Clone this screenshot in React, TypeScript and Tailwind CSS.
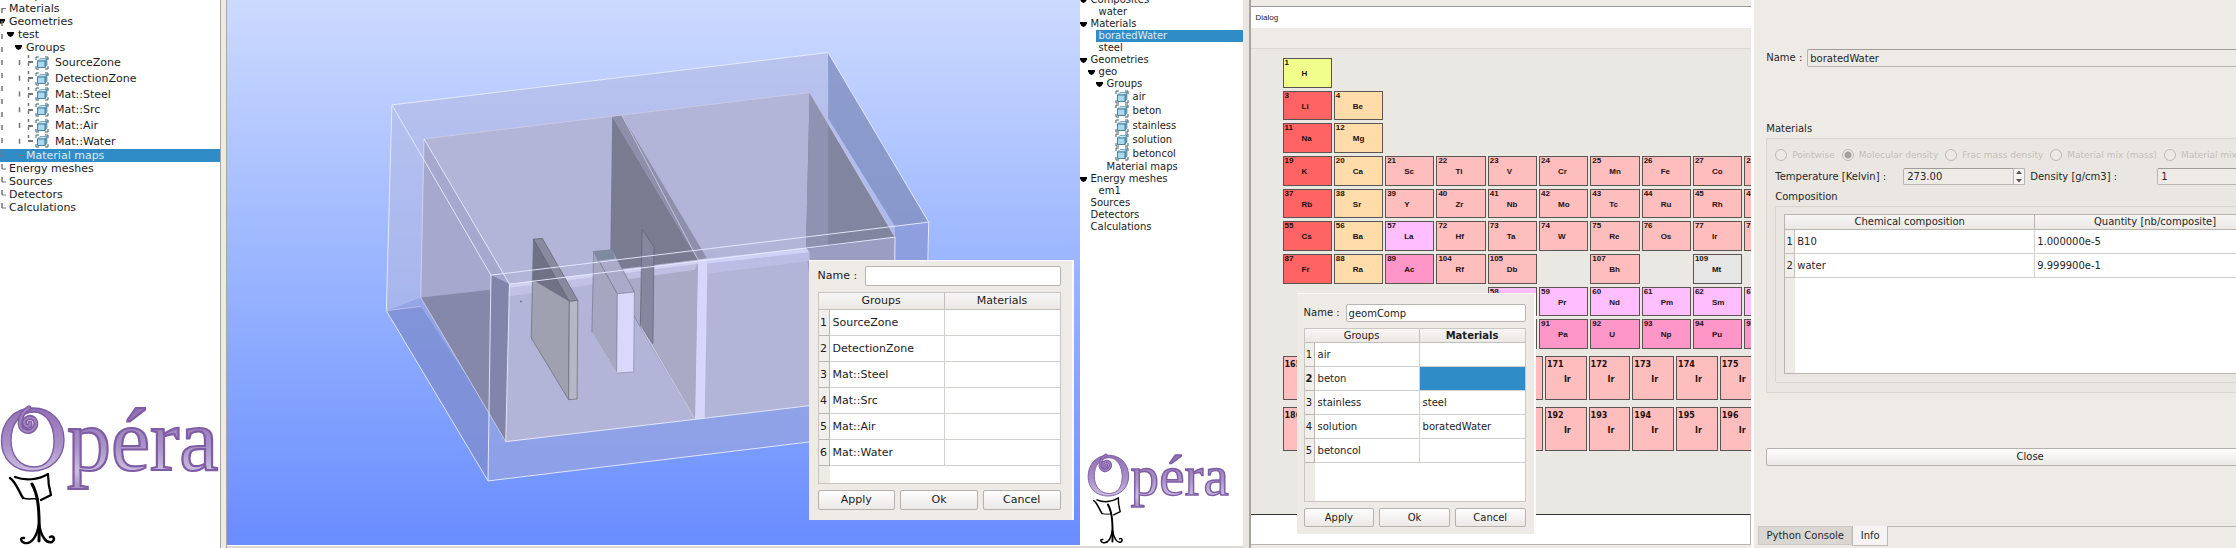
import { useId } from "react";
import type { ReactNode } from "react";

type Size = "lg" | "sm";
type Node = {
  label: string;
  depth: number;
  open?: boolean;
  group?: boolean;
  selected?: boolean;
};

const treeOne: Node[] = [
  { label: "Composites", depth: 0 },
  { label: "Materials", depth: 0 },
  { label: "Geometries", depth: 0, open: true },
  { label: "test", depth: 1, open: true },
  { label: "Groups", depth: 2, open: true },
  { label: "SourceZone", depth: 3, group: true },
  { label: "DetectionZone", depth: 3, group: true },
  { label: "Mat::Steel", depth: 3, group: true },
  { label: "Mat::Src", depth: 3, group: true },
  { label: "Mat::Air", depth: 3, group: true },
  { label: "Mat::Water", depth: 3, group: true },
  { label: "Material maps", depth: 2, selected: true },
  { label: "Energy meshes", depth: 0 },
  { label: "Sources", depth: 0 },
  { label: "Detectors", depth: 0 },
  { label: "Calculations", depth: 0 },
];

const treeTwo: Node[] = [
  { label: "Composites", depth: 0, open: true },
  { label: "water", depth: 1 },
  { label: "Materials", depth: 0, open: true },
  { label: "boratedWater", depth: 1, selected: true },
  { label: "steel", depth: 1 },
  { label: "Geometries", depth: 0, open: true },
  { label: "geo", depth: 1, open: true },
  { label: "Groups", depth: 2, open: true },
  { label: "air", depth: 3, group: true },
  { label: "beton", depth: 3, group: true },
  { label: "stainless", depth: 3, group: true },
  { label: "solution", depth: 3, group: true },
  { label: "betoncol", depth: 3, group: true },
  { label: "Material maps", depth: 2 },
  { label: "Energy meshes", depth: 0, open: true },
  { label: "em1", depth: 1 },
  { label: "Sources", depth: 0 },
  { label: "Detectors", depth: 0 },
  { label: "Calculations", depth: 0 },
];

function GroupIcon() {
  return (
    <svg viewBox="0 0 14 14" className="size-[14px] shrink-0" aria-hidden="true">
      <path d="M1 4V1h3M10 1h3v3M13 10v3h-3M4 13H1v-3" fill="none" stroke="#3d5f6b" strokeWidth="1" />
      <path d="M2.500 5l2.500-2.500h7l-2 2.500z" fill="#c9e8f5" stroke="#4c86a0" strokeWidth=".7" />
      <path d="M10 5l2-2.500v6.500l-2 2.500z" fill="#6fa9c4" stroke="#4c86a0" strokeWidth=".7" />
      <path d="M2.500 5H10v6.500H2.500z" fill="#a9d9ef" stroke="#3f7590" strokeWidth=".9" />
    </svg>
  );
}

function Arrow() {
  return (
    <svg viewBox="0 0 7 5" className="h-[5px] w-[7px] shrink-0" aria-hidden="true">
      <path d="M0 0h7v1.200Q6 4.500 3.500 5 1 4.500 0 1.200z" fill="#000" />
    </svg>
  );
}

const pads = {
  lg: ["pl-[9px]", "pl-[18px]", "pl-[26px]", "pl-[35px]"],
  sm: ["pl-[11px]", "pl-[19px]", "pl-[27px]", "pl-[35px]"],
};

function Row({ node, size }: { node: Node; size: Size }) {
  const height = node.group ? "min-h-0 flex-1" : size === "lg" ? "h-[13px]" : "h-[12px]";
  const fullBar = node.selected && size === "lg" ? "bg-[#308cc6] text-[#dcecf7]" : "";
  const partBar = node.selected && size === "sm" ? "-ml-[3px] flex-1 bg-[#308cc6] pl-[3px] text-[#dcecf7]" : "";
  return (
    <li className={`relative flex items-center whitespace-nowrap ${height} ${pads[size][node.depth]} ${fullBar}`}>
      {node.open && (
        <span className="-ml-[11px] mr-[4px] flex">
          <Arrow />
        </span>
      )}
      {node.group && (
        <span className={size === "lg" ? "mr-[6px] flex" : "mr-[4px] flex"}>
          <GroupIcon />
        </span>
      )}
      <span className={partBar}>{node.label}</span>
    </li>
  );
}

function Tree({ nodes, size }: { nodes: Node[]; size: Size }) {
  const first = nodes.findIndex((n) => n.group);
  const last = first + nodes.filter((n) => n.group).length;
  return (
    <ul className={size === "lg" ? "-mt-[11px] text-[11px] leading-[13px]" : "-mt-[6px] text-[10px] leading-[12px]"}>
      {nodes.slice(0, first).map((n) => (
        <Row key={n.label} node={n} size={size} />
      ))}
      <li>
        <ul className={size === "lg" ? "flex h-[95px] flex-col pt-px" : "flex h-[71px] flex-col"}>
          {nodes.slice(first, last).map((n) => (
            <Row key={n.label} node={n} size={size} />
          ))}
        </ul>
      </li>
      {nodes.slice(last).map((n) => (
        <Row key={n.label} node={n} size={size} />
      ))}
    </ul>
  );
}

function TreeLines() {
  return (
    <svg viewBox="0 0 60 220" className="pointer-events-none absolute left-0 top-0 h-[220px] w-[60px]" aria-hidden="true">
      <g stroke="#777" fill="none" strokeWidth="1.500">
        <path d="M2 0V209" strokeDasharray="5 8" strokeDashoffset="5" />
        <path d="M19.500 55V150" strokeDasharray="5 10.750" strokeDashoffset="-5" />
        <path d="M28.500 55V142" strokeDasharray="3 5" />
        <path d="M2 8.500h4M2 169h4M2 182h4M2 195h4M2 208h4" strokeWidth="1" />
        <path d="M28 62h5M28 78h5M28 94h5M28 110h5M28 126h5M28 141h5" strokeWidth="2" />
      </g>
      <path d="M0 156h3M18 155.500h6" stroke="#8a6f74" />
    </svg>
  );
}

function Logo({ className }: { className: string }) {
  const id = useId();
  return (
    <svg viewBox="0 400 220 148" className={className} role="img" aria-label="Opéra">
      <defs>
        <linearGradient id={id} gradientUnits="userSpaceOnUse" x1="0" y1="405" x2="0" y2="488">
          <stop offset="0" stopColor="#8f6db3" />
          <stop offset=".5" stopColor="#a992c8" />
          <stop offset=".8" stopColor="#cbbfe0" />
          <stop offset="1" stopColor="#a78fc6" />
        </linearGradient>
      </defs>
      <g fontFamily="Liberation Serif, serif" fill={`url(#${id})`} stroke="#7f5ca4">
        <path
          strokeWidth="1.400"
          fillRule="evenodd"
          d="M33 408C14 408 1.500 422 1.500 441C1.500 459 14 471 32 471C51 471 64 458 64 440C64 421 51 408 33 408zM34 412C47 412 54 426 54 441C54 457 47 467 34 467C20 467 11 456 11 440C11 424 20 412 34 412z"
        />
        <text x="67" y="470" fontSize="88" strokeWidth="2.200">
          péra
        </text>
      </g>
      <path d="M29 408C19 414 17 428 25 431C33 434 39 424 34 419C29 415 22 420 25 425C27 428 31 426 30 423" fill="none" stroke="#7f5ca4" strokeWidth="5" strokeLinecap="round" />
      <path d="M29 408C19 414 17 428 25 431C33 434 39 424 34 419C29 415 22 420 25 425C27 428 31 426 30 423" fill="none" stroke="#a183c0" strokeWidth="2" strokeLinecap="round" />
      <g fill="none" stroke="#000" strokeLinecap="round" strokeLinejoin="round">
        <path d="M10 478C16 482 19 492 23 498" strokeWidth="2.400" />
        <path d="M15 477C25 481 38 480 48 474" strokeWidth="2.200" />
        <path d="M48 474C48 482 49 488 51 495L41 500" strokeWidth="2.200" />
        <path d="M23 498C29 500 33 498 38 499" strokeWidth="1.500" />
        <path d="M32 484C37 493 40 504 39 541" strokeWidth="3" />
        <path d="M39 524C37 536 32 544 25 543C20 542 20 537 24 538" strokeWidth="2.400" />
        <path d="M39 524C41 536 46 544 52 542C56 539 53 535 50 537" strokeWidth="2.400" />
      </g>
    </svg>
  );
}

function Scene() {
  return (
    <svg viewBox="-386 -108 2306 1473" className="block h-full w-full" preserveAspectRatio="xMinYMin meet" aria-label="Geometry view">
      <g transform="scale(1 .901)">
        <path d="M60 195L1240 38L1512 547L1500 1165L320 1324L45 813z" fill="#b3b9e4" fillOpacity=".62" />
        <path d="M45 813L138 773L368 1206L1415 1068L1500 1165L320 1324z" fill="#7489dc" fillOpacity=".35" />
        <path d="M45 813L138 800L322 1110L320 1324z" fill="#6378c4" fillOpacity=".4" />
        <path d="M1240 38L1512 547L1421 560L1240 235z" fill="#6f82b6" fillOpacity=".6" />
        <path d="M1421 560L1512 547L1505 1000H1415z" fill="#8294da" fillOpacity=".7" />
        <path d="M147 297L1190 158L1421 592L1415 1068L368 1206L138 773z" fill="#b2b4d8" />
        <path d="M147 297L378 733L374 744L138 773z" fill="#a6a8ce" />
        <path d="M138 773L374 744L368 1206z" fill="#8688aa" />
        <path d="M328 706L378 733L368 1206L322 1110z" fill="#8285aa" />
        <path d="M1190 158L1421 592L1232 622L1180 628z" fill="#81859f" />
        <path d="M1190 158L1240 250V622L1180 628z" fill="#8f92b1" />
        <path d="M1180 628L1421 592V700H1188z" fill="#9b9dc2" />
        <path d="M656 230L888 660L880 1139L735 870L650 700z" fill="#797b91" />
        <path d="M656 690L888 660L880 1139L735 870z" fill="#a9aac6" />
        <path d="M656 230L682 226L912 655L888 660z" fill="#8e90ab" />
        <path d="M888 660L914 656L906 1136L880 1139z" fill="#d6d5fa" />
        <path d="M912 657L1180 624L1190 638L914 672z" fill="#d0d1f7" />
        <path d="M914 672L1190 638V664L912 702z" fill="#bcbde4" />
        <path d="M378 733L888 660L880 690L376 770z" fill="#c3c4e8" fillOpacity=".8" />
        <path d="M378 733L888 664V672L378 744z" fill="#d6d6f8" fillOpacity=".8" />
        <path d="M737 568L769 622L766 912L732 858z" fill="#85879e" stroke="#5e6075" strokeWidth="2" />
        <path d="M443 598L540 785L538 1080L437 895z" fill="#a0a1b0" stroke="#696a78" strokeWidth="2" />
        <path d="M443 598L540 785L440 720z" fill="#6f7184" />
        <path d="M443 598L467 596L563 782L540 785z" fill="#888a9d" stroke="#5f6172" strokeWidth="2" />
        <path d="M540 785L563 782L561 1078L538 1080z" fill="#b5b6c6" stroke="#696a78" strokeWidth="2" />
        <path d="M606 635L670 762L668 1000L601 878z" fill="#a5a6c0" stroke="#777991" strokeWidth="2" />
        <path d="M606 635L656 630L716 757L670 762z" fill="#a9abc9" stroke="#777991" strokeWidth="2" />
        <path d="M606 635L656 630L664 656L616 663z" fill="#7f8aa0" />
        <path d="M670 762L716 757L714 997L668 1000z" fill="#d9d8fb" stroke="#8b8da6" strokeWidth="2" />
        <circle cx="409" cy="785" r="3" fill="#77798f" />
      </g>
      <g transform="scale(1 .901)" fill="none" stroke="#e8ecff" strokeWidth="2.600">
        <path d="M60 195L1240 38L1512 547L328 706zM60 195L45 813L320 1324L328 706M320 1324L1500 1165L1512 547" />
        <path d="M147 297L378 733L368 1206L880 1139L1415 1068M378 733L1421 592L1415 1068" />
        <path d="M147 297L138 773L368 1206M732 858L880 1139M888 660L682 226M601 878L668 1000" strokeOpacity=".6" />
        <path d="M147 297L1190 158L1421 592M45 813L138 800" stroke="#d9cfe4" strokeOpacity=".7" />
      </g>
    </svg>
  );
}

const headBg = "bg-linear-to-b from-[#f7f6f5] to-[#ebe8e4]";
const buttonStyle =
  "rounded-[2px] border border-[#b5b1ac] bg-linear-to-b from-[#fdfdfc] to-[#ebe9e6] text-center text-[#1c1c1c]";

type Assign = { group: string; material: string; active?: boolean };

function AssignDialog({
  name,
  rows,
  size,
  className,
}: {
  name: string;
  rows: Assign[];
  size: Size;
  className: string;
}) {
  const id = useId();
  const lg = size === "lg";
  const hasActive = rows.some((r) => r.active);
  const cell = lg ? "h-[26px] px-[3px]" : "h-[24px] px-[3px]";
  return (
    <form
      onSubmit={(e) => e.preventDefault()}
      className={`absolute flex flex-col border-t border-r-2 border-[#fbfafa] bg-[#eeebe7] text-[#1c1c1c] ${className}`}
    >
      <div className="flex items-center">
        <label htmlFor={id} className={lg ? "w-[47px]" : "w-[42px]"}>
          Name :
        </label>
        <input
          id={id}
          defaultValue={name}
          className={`min-w-0 flex-1 rounded-[2px] border border-[#b8b4af] bg-white px-[2px] outline-none ${lg ? "h-[20px]" : "h-[18px]"}`}
        />
      </div>
      <table className="w-full table-fixed border-separate border-spacing-0 border border-[#c9c6c1] bg-white">
        <colgroup>
          <col className={lg ? "w-[11px]" : "w-[10px]"} />
          <col />
          <col />
        </colgroup>
        <thead>
          <tr className={`${headBg} ${lg ? "h-[17px]" : "h-[14px]"}`}>
            <th colSpan={2} className={`border-b border-r border-[#c3c0bb] p-0 font-normal ${headBg}`}>
              Groups
            </th>
            <th className={`border-b border-[#c3c0bb] p-0 ${hasActive ? "font-bold" : "font-normal"} ${headBg}`}>
              Materials
            </th>
          </tr>
        </thead>
        <tbody>
          {rows.map((r, i) => (
            <tr key={r.group}>
              <th
                scope="row"
                className={`border-b border-r border-[#b9b6b1] bg-[#f1efec] p-0 text-center ${r.active ? "font-bold" : "font-normal"}`}
              >
                {i + 1}
              </th>
              <td className={`border-b border-r border-[#d3d1ce] ${cell}`}>{r.group}</td>
              <td className={`border-b border-[#d3d1ce] ${cell} ${r.active ? "bg-[#308cc6]" : ""}`}>{r.material}</td>
            </tr>
          ))}
          <tr className={lg ? "h-[17px]" : "h-[38px]"}>
            <td className="bg-[#eeebe7] p-0" />
            <td className="p-0" colSpan={2} />
          </tr>
        </tbody>
      </table>
      <div className="flex gap-[5px]">
        {["Apply", "Ok", "Cancel"].map((b) => (
          <button key={b} type="button" className={`flex-1 ${buttonStyle} ${lg ? "h-[20px]" : "h-[19px]"}`}>
            {b}
          </button>
        ))}
      </div>
    </form>
  );
}

const RED = "bg-[#ff6464]";
const ORANGE = "bg-[#ffdcaa]";
const PINK = "bg-[#ffbebe]";
const VIOLET = "bg-[#ffbeff]";
const MAGENTA = "bg-[#ff96c8]";
const LIME = "bg-[#f0ff8c]";
const GREY = "bg-[#e6e6e6]";

type Cell = [number, string, string] | null;
const run = (bg: string, items: [number, string][]): Cell[] => items.map(([n, s]) => [n, s, bg]);
const blanks = (n: number): Cell[] => Array.from({ length: n }, () => null);

const cells: Cell[] = [
  [1, "H", LIME],
  ...blanks(9),
  [3, "Li", RED],
  [4, "Be", ORANGE],
  ...blanks(8),
  [11, "Na", RED],
  [12, "Mg", ORANGE],
  ...blanks(8),
  [19, "K", RED],
  [20, "Ca", ORANGE],
  ...run(PINK, [[21, "Sc"], [22, "Ti"], [23, "V"], [24, "Cr"], [25, "Mn"], [26, "Fe"], [27, "Co"], [28, "Ni"]]),
  [37, "Rb", RED],
  [38, "Sr", ORANGE],
  ...run(PINK, [[39, "Y"], [40, "Zr"], [41, "Nb"], [42, "Mo"], [43, "Tc"], [44, "Ru"], [45, "Rh"], [46, "Pd"]]),
  [55, "Cs", RED],
  [56, "Ba", ORANGE],
  [57, "La", VIOLET],
  ...run(PINK, [[72, "Hf"], [73, "Ta"], [74, "W"], [75, "Re"], [76, "Os"], [77, "Ir"], [78, "Pt"]]),
  [87, "Fr", RED],
  [88, "Ra", ORANGE],
  [89, "Ac", MAGENTA],
  [104, "Rf", PINK],
  [105, "Db", PINK],
  null,
  [107, "Bh", PINK],
  null,
  [109, "Mt", GREY],
  null,
  ...blanks(4),
  ...run(VIOLET, [[58, "Ce"], [59, "Pr"], [60, "Nd"], [61, "Pm"], [62, "Sm"], [63, "Eu"]]),
  ...blanks(4),
  ...run(MAGENTA, [[90, "Th"], [91, "Pa"], [92, "U"], [93, "Np"], [94, "Pu"], [95, "Am"]]),
];

function ElementCell({ cell }: { cell: Cell }) {
  if (!cell) return <span />;
  return (
    <button
      type="button"
      className={`flex min-h-0 flex-col items-start overflow-hidden border border-[#5c5450] text-left font-['Liberation_Sans',sans-serif] text-[8px] font-bold leading-[8px] text-[#24100f] ${cell[2]}`}
    >
      <span className="pl-px">{cell[0]}</span>
      <span className="pl-[18px] pt-[3px]">{cell[1]}</span>
    </button>
  );
}

function IsotopeRow({ start }: { start: number }) {
  return (
    <div className="grid w-[479px] grid-cols-11 gap-[2px]">
      {Array.from({ length: 11 }, (_, i) => (
        <button
          key={i}
          type="button"
          className="flex h-[44px] flex-col items-start border border-[#5c5450] bg-[#ffbebe] pt-[3px] text-left text-[8px] font-bold leading-[10px] text-[#24100f]"
        >
          <span className="pl-px">{start + i}</span>
          <span className="pl-[18px] pt-[5px]">Ir</span>
        </button>
      ))}
    </div>
  );
}

function Radio({ label, checked }: { label: string; checked?: boolean }) {
  return (
    <label className="flex items-center gap-[5px] whitespace-nowrap text-[9px] text-[#c2bfba]">
      <input
        type="radio"
        name="density-mode"
        disabled
        defaultChecked={checked}
        className="size-[12px] appearance-none rounded-full border border-[#bdbab5] bg-[#edeae6] checked:bg-[radial-gradient(circle,#a5a29d_0_3px,#edeae6_4px)]"
      />
      {label}
    </label>
  );
}

function Frame({ className, children }: { className: string; children: ReactNode }) {
  return <div className={`rounded-[2px] border border-[#d9d6d1] bg-[#eae7e2] ${className}`}>{children}</div>;
}

function MaterialPanel() {
  const field = "rounded-[2px] border border-[#b8b5b0] border-t-[#a09d99] bg-[#eeebe7] outline-none";
  return (
    <section className="relative flex min-w-0 flex-[470_1_0px] flex-col overflow-hidden bg-[#eeebe7] pl-[12px] text-[10px] leading-[12px] text-[#262626]">
      <div className="-mr-[58px] flex flex-col">
        <div className="mt-[49px] flex items-center">
          <label htmlFor="mat-name" className="w-[41px]">
            Name :
          </label>
          <input id="mat-name" defaultValue="boratedWater" readOnly className={`h-[18px] flex-1 px-[2px] ${field}`} />
        </div>
        <h2 className="mt-[56px]">Materials</h2>
        <Frame className="mt-[3px] h-[255px] px-[8px] pt-[10px]">
          <div className="flex gap-[7px]">
            <Radio label="Pointwise" />
            <Radio label="Molecular density" checked />
            <Radio label="Frac mass density" />
            <Radio label="Material mix (mass)" />
            <Radio label="Material mix (density)" />
          </div>
          <div className="mt-[7px] flex items-center">
            <label htmlFor="temp" className="w-[128px]">
              Temperature [Kelvin] :
            </label>
            <span className="relative mr-[5px] flex w-[122px]">
              <input id="temp" defaultValue="273.00" className={`h-[17px] w-full px-[3px] ${field}`} />
              <svg viewBox="0 0 12 17" className="pointer-events-none absolute right-0 top-0 h-[17px] w-[12px]" aria-hidden="true">
                <path d="M.5 .5h11v16h-11z" fill="#f6f5f3" stroke="#b8b5b0" />
                <path d="M3 6l3-3.500L9 6zM3 11l3 3.500L9 11z" fill="#555" />
              </svg>
            </span>
            <label htmlFor="density" className="w-[127px]">
              Density [g/cm3] :
            </label>
            <input id="density" defaultValue="1" className={`h-[17px] min-w-0 flex-1 px-[3px] ${field}`} />
          </div>
          <h3 className="mt-[6px]">Composition</h3>
          <Frame className="mt-[3px] h-[177px] px-[8px] pt-[7px]">
            <div className="h-[160px] border border-[#b8b5b0] bg-[linear-gradient(90deg,#eeebe7_10px,#fff_10px)]">
              <table className="w-full table-fixed border-separate border-spacing-0">
                <colgroup>
                  <col className="w-[10px]" />
                  <col />
                  <col />
                </colgroup>
                <thead>
                  <tr className="h-[15px]">
                    <th colSpan={2} className={`border-b border-r border-[#b8b5b0] p-0 font-normal ${headBg}`}>
                      Chemical composition
                    </th>
                    <th className={`border-b border-[#b8b5b0] p-0 font-normal ${headBg}`}>Quantity [nb/composite]</th>
                  </tr>
                </thead>
                <tbody className="bg-white">
                  {[
                    ["B10", "1.000000e-5"],
                    ["water", "9.999900e-1"],
                  ].map(([c, q], i) => (
                    <tr key={c} className="h-[24px]">
                      <th scope="row" className="border-b border-r border-[#c3c0bb] bg-[#f1efec] p-0 font-normal">
                        {i + 1}
                      </th>
                      <td className="border-b border-r border-[#d3d1ce] px-[2px] py-0">{c}</td>
                      <td className="border-b border-[#d3d1ce] px-[2px] py-0">{q}</td>
                    </tr>
                  ))}
                </tbody>
              </table>
            </div>
          </Frame>
        </Frame>
        <button type="button" className={`mt-[55px] h-[18px] ${buttonStyle}`}>
          Close
        </button>
      </div>
      <div className="-ml-[8px] mt-auto flex h-[22px] items-start" role="tablist">
        <button type="button" role="tab" aria-selected="false" className="h-[19px] w-[94px] border border-[#ccc9c4] bg-[#dad7d3]">
          Python Console
        </button>
        <button type="button" role="tab" aria-selected="true" className="h-[20px] w-[36px] border border-t-0 border-[#bdbab5] bg-[#f5f4f2]">
          Info
        </button>
        <span className="h-px flex-1 bg-[#bdbab5]" />
      </div>
    </section>
  );
}

export default function App() {
  return (
    <main className="flex min-h-screen w-full items-stretch overflow-hidden bg-[#eeebe7] font-['DejaVu_Sans',sans-serif] text-[#1c1c1c]">
      <aside className="relative flex w-[220px] shrink-0 flex-col justify-between overflow-hidden bg-white">
        <Tree nodes={treeOne} size="lg" />
        <TreeLines />
        <Logo className="h-[148px] w-[220px]" />
      </aside>
      <div className="w-[7px] shrink-0 border-x border-[#a9a6a2] bg-[#eeebe5]" />
      <section className="relative flex min-w-0 flex-[853_1_0px] flex-col">
        <div className="min-h-[545px] flex-1 bg-linear-to-b from-[#cddaff] to-[#698cff]">
          <Scene />
        </div>
        <div className="h-[3px] border-t border-white bg-[#dcd9d4]" />
        <AssignDialog
          name=""
          size="lg"
          className="right-[6px] top-[260px] h-[260px] w-[265px] gap-[6px] pb-[10px] pl-[9px] pr-[11px] pt-[5px] text-[11px] leading-[12px]"
          rows={["SourceZone", "DetectionZone", "Mat::Steel", "Mat::Src", "Mat::Air", "Mat::Water"].map((group) => ({
            group,
            material: "",
          }))}
        />
      </section>
      <aside className="flex w-[163px] shrink-0 flex-col justify-between overflow-hidden border-b-2 border-[#dcd9d4] bg-white">
        <Tree nodes={treeTwo} size="sm" />
        <Logo className="ml-[7px] h-[96px] w-[143px]" />
      </aside>
      <div className="w-[8px] shrink-0 border-r-2 border-[#a6a49f] bg-[#e9e6e1]" />
      <section className="relative flex min-w-0 flex-[501_1_0px] flex-col overflow-hidden">
        <div className="h-[7px] border-b border-[#9b9995]" />
        <header className="flex h-[21px] items-center bg-white pl-[5px] font-['Liberation_Sans',sans-serif] text-[8px]">Dialog</header>
        <div className="h-[21px] border-b border-[#dad7d3]" />
        <div className="flex flex-1 flex-col overflow-hidden bg-[#eae8e3] pl-[32px] pt-[9px]">
          <div className="grid h-[291px] w-[511px] grid-cols-10 grid-rows-9 gap-x-[2px] gap-y-[3px]">
            {cells.map((c, i) => (
              <ElementCell key={i} cell={c} />
            ))}
          </div>
          <div className="mt-[7px] flex flex-col gap-[7px]">
            <IsotopeRow start={165} />
            <IsotopeRow start={186} />
          </div>
        </div>
        <div className="h-[31px] border-b border-r border-t border-[#b8b5b0] border-t-[#333] bg-white" />
        <div className="h-[3px]" />
        <AssignDialog
          name="geomComp"
          size="sm"
          className="left-[46px] top-[293px] h-[241px] w-[239px] gap-[6px] pb-[8px] pl-[7px] pr-[8px] pt-[10px] text-[10px] leading-[12px]"
          rows={[
            { group: "air", material: "" },
            { group: "beton", material: "", active: true },
            { group: "stainless", material: "steel" },
            { group: "solution", material: "boratedWater" },
            { group: "betoncol", material: "" },
          ]}
        />
      </section>
      <div className="w-[3px] shrink-0 bg-white" />
      <MaterialPanel />
    </main>
  );
}
